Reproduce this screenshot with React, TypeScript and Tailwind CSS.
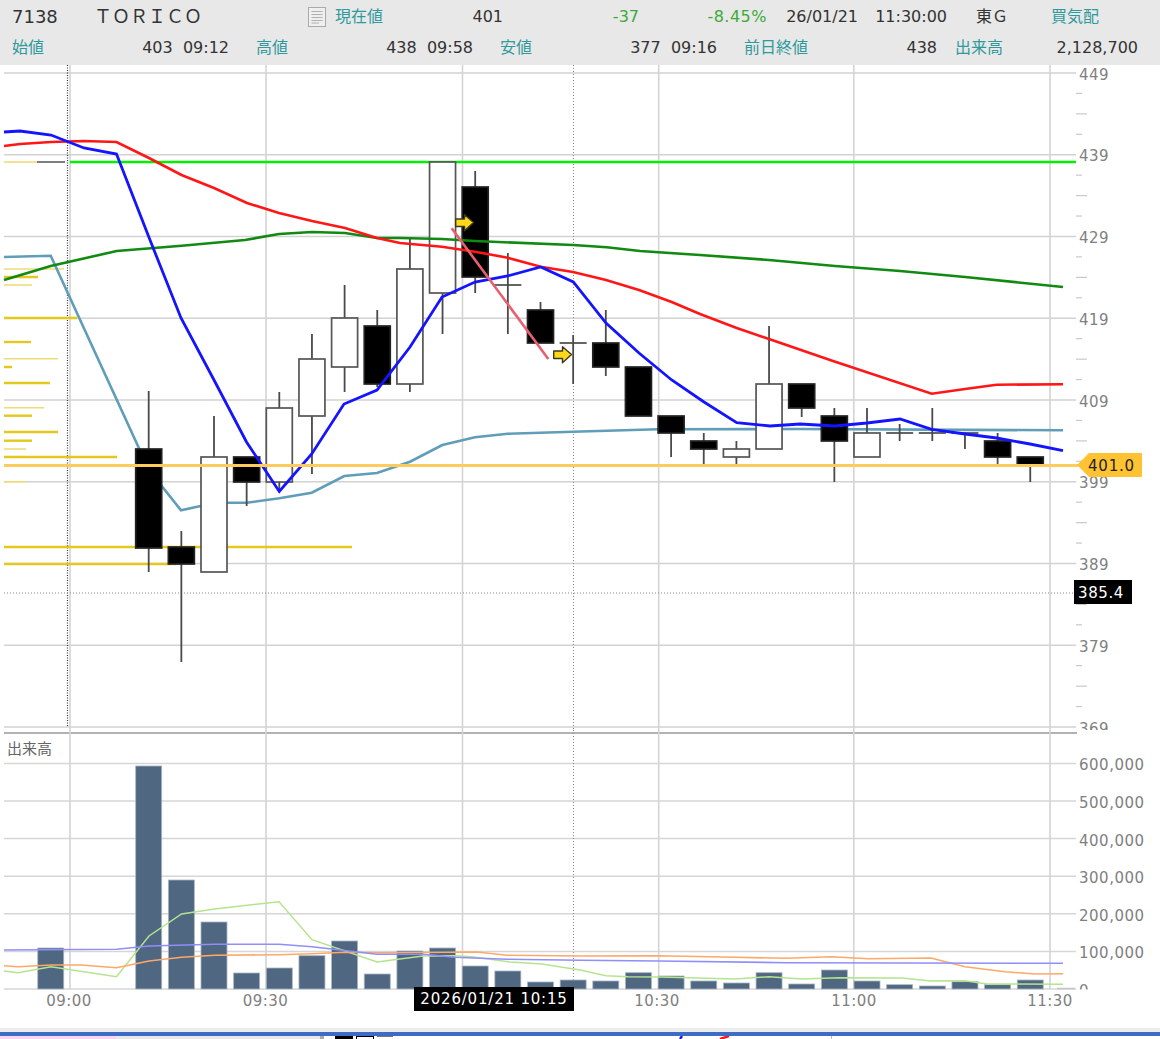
import React from "react"

type Candle = { body: [number, number]; wick: [number, number]; kind: "up" | "down" | "doji" }

const barX = (i: number) => 148.7 + 32.65 * i

const candles: Candle[] = [
  { kind: "down", body: [449, 548], wick: [391, 572] },
  { kind: "down", body: [547, 564], wick: [531, 662] },
  { kind: "up", body: [457, 572], wick: [416, 572] },
  { kind: "down", body: [457, 482], wick: [457, 506] },
  { kind: "up", body: [408, 482], wick: [392, 491] },
  { kind: "up", body: [359, 416], wick: [334, 474] },
  { kind: "up", body: [318, 367], wick: [285, 392] },
  { kind: "down", body: [326, 384], wick: [310, 387] },
  { kind: "up", body: [269, 384], wick: [237, 392] },
  { kind: "up", body: [162, 293], wick: [162, 334] },
  { kind: "down", body: [187, 277], wick: [171, 293] },
  { kind: "doji", body: [285, 285], wick: [253, 334] },
  { kind: "down", body: [310, 343], wick: [302, 343] },
  { kind: "doji", body: [343, 343], wick: [335, 384] },
  { kind: "down", body: [343, 367], wick: [310, 376] },
  { kind: "down", body: [367, 416], wick: [367, 416] },
  { kind: "down", body: [416, 433], wick: [416, 457] },
  { kind: "down", body: [441, 449], wick: [433, 465] },
  { kind: "up", body: [449, 457], wick: [441, 465] },
  { kind: "up", body: [384, 449], wick: [326, 449] },
  { kind: "down", body: [384, 408], wick: [384, 417] },
  { kind: "down", body: [416, 441], wick: [408, 482] },
  { kind: "up", body: [433, 457], wick: [408, 457] },
  { kind: "doji", body: [433, 433], wick: [424, 441] },
  { kind: "doji", body: [433, 433], wick: [408, 441] },
  { kind: "doji", body: [433, 433], wick: [433, 449] },
  { kind: "down", body: [441, 457], wick: [433, 465] },
  { kind: "down", body: [457, 465], wick: [457, 482] },
]

// moving averages, in picture coordinates
const blueLine = "4,132 20,131 51,135 84,148 116.5,154 150,240 181,318 214,380 246.5,442 279.3,491.5 311.7,454 344,404 377,390 410,347 442,297 475,282 507.7,276 540.7,267 573.3,282 606,323 639,353 671.7,380 704,402 736.7,422.7 770,426 800,424 835,426 867,423 900,419 931.7,429.3 965,434 996.7,438 1030,444 1063,450.7"
const redLine = "4,146 20,144 51,142 84,141 116.5,142 149,158 181.5,175 214,188 247,203 279,213 312,221 345,228 377,238 400,243 442,246.7 475,251.7 507.7,257.7 540.7,266.7 573,272 606,280 639,290 671.7,302 700,314 736.7,328 769,339 833,361 931.7,393.7 965,389 996.7,384.7 1063,384.3"
const greenLine = "4,280 50.7,266 116.7,251 181.7,245.7 245,240 279,234 312,232 345,233 377,238 400,238 442,239 475,241 573,245 606.7,247.3 640,251 700,255 769,260 835,266 900,271 965,277 1063,287"
const tealLine = "4,257 50.7,255.7 149,470 181,510.3 200.7,506 228,502.7 246.7,502.7 279.3,498.3 311.7,492.7 344.3,476 377,473 410,461.7 442.3,445 475,437.3 507.7,433.7 573,431.7 658,429.3 800,429 1063,430.3"

// volume profile along the left edge: y, right end, weight
const profile: [number, number, "thick" | "thin"][] = [
  [269, 64, "thin"], [277, 38, "thick"], [285, 32, "thin"], [318, 77, "thick"], [342, 31, "thick"],
  [358.7, 58, "thin"], [367, 12, "thick"], [383, 50, "thick"], [407.7, 44, "thin"], [415.7, 32, "thick"],
  [432, 58, "thick"], [440.7, 32, "thick"], [449, 26, "thin"], [457, 117, "thick"], [481.7, 26, "thin"],
  [547, 352, "thick"], [564, 176, "thick"],
]

// tops of the volume bars; the first one stands three slots before the first candle
const volumeTops = [948, 766, 880, 922, 973, 968, 955.7, 941, 974, 951, 948, 966, 971, 982, 980, 981, 972.7, 976, 981, 983, 972.7, 984, 970, 981, 984.7, 986, 981.7, 984.7, 980]

const volGreen = "4,971 18,972.7 51,966.7 116.5,976.7 149,936 181.6,914 214.6,909 279,901.7 312,939.7 377,962 423,956 455,955.7 472,956.7 510,962 542,964 580,970 606,975.7 628,976.7 659,977 735,979 769,976.7 802,979 839,977.7 902,978 931,981 965,980.7 987,984 1063,984.3"
const volBlue = "4,950 116.5,949.3 149,946 214.6,944.3 279,944.3 312,946.7 377,954.3 423,954.3 455,957.3 507,959.3 580,960.3 658,961 787,962.7 1063,963.3"
const volOrange = "4,965.7 18,966.7 51,965 81,965 116.5,967.7 149,961 181.6,957.3 214.6,955.3 279,954.7 312,953.7 344.5,952.3 377,952.7 477,952 507,955.3 580,956 658,955.7 735,957.3 787,958.3 831.6,956.7 868.6,958.7 931,958 965,966.7 1005,971.7 1035,974 1063,973.7"

const priceTicks = [449, 439, 429, 419, 409, 399, 389, 379, 369]
const volumeTicks = ["600,000", "500,000", "400,000", "300,000", "200,000", "100,000", "0"]
const gridX = [70, 266, 462.5, 658.7, 853.8, 1050]
const times: [string, number][] = [["09:00", 69], ["09:30", 265.5], ["10:30", 657], ["11:00", 854], ["11:30", 1050]]

const priceY = (i: number) => 73 + 81.75 * i
const volumeY = (i: number) => 763.4 + 37.6 * i

function Arrow({ x, y }: { x: number; y: number }) {
  return (
    <path
      transform={`translate(${x} ${y})`}
      d="M0.7 5H9.5V0.8L18.5 8.5L9.5 16.7V12.5H0.7Z"
      fill="#ffd81a"
      stroke="#3a3a20"
      strokeWidth="1.4"
      strokeLinejoin="round"
    />
  )
}

function CandleMark({ c, i }: { c: Candle; i: number }) {
  const x = barX(i)
  return (
    <g>
      <line x1={x} x2={x} y1={c.wick[0]} y2={c.wick[1]} stroke="#4a4a4a" strokeWidth="1.8" />
      {c.kind === "doji" ? (
        <line x1={x - 13.5} x2={x + 13.5} y1={c.body[0]} y2={c.body[0]} stroke="#4a4a4a" strokeWidth="1.7" />
      ) : (
        <rect
          x={x - 13}
          y={c.body[0]}
          width="26"
          height={c.body[1] - c.body[0]}
          fill={c.kind === "down" ? "#000" : "#fff"}
          stroke={c.kind === "down" ? "#222" : "#555"}
          strokeWidth="1.7"
        />
      )}
    </g>
  )
}

function PricePane() {
  return (
    <svg viewBox="0 65 1160 665" className="block w-[1160px] h-[665px] text-[15px] tracking-[0.5px]">
      {/* grid */}
      {priceTicks.map((_, i) => (
        <line key={i} x1="4" x2="1076" y1={priceY(i)} y2={priceY(i)} stroke="#d2d2d2" strokeWidth="1.5" />
      ))}
      {gridX.map((x) => (
        <line key={x} x1={x} x2={x} y1="65" y2="730" stroke="#d4d4d4" strokeWidth="1.6" />
      ))}
      <line x1="67.5" x2="67.5" y1="65" y2="727" stroke="#333" strokeWidth="1.2" strokeDasharray="1 1.5" />
      <line x1="573.5" x2="573.5" y1="65" y2="730" stroke="#888" strokeWidth="1" strokeDasharray="1 2" />
      <line x1="4" x2="1075" y1="593" y2="593" stroke="#888" strokeWidth="1" strokeDasharray="1 2" />

      {/* axis */}
      {priceTicks.map((p, i) => (
        <g key={p}>
          <text x="1079" y={priceY(i) + 6.5} fill="#808080">{p}</text>
          {i < 8 &&
            [20.4, 40.9, 61.3].map((d, k) => (
              <line
                key={d}
                x1="1076"
                x2={k === 1 ? 1087 : 1082}
                y1={priceY(i) + d}
                y2={priceY(i) + d}
                stroke="#c8c8c8"
                strokeWidth="1.2"
              />
            ))}
        </g>
      ))}

      {/* volume profile */}
      <line x1="4" x2="37" y1="162" y2="162" stroke="#eed873" strokeWidth="1.5" />
      <line x1="37" x2="65" y1="162" y2="162" stroke="#555" strokeWidth="1.5" />
      {profile.map(([y, end, w]) => (
        <line
          key={y}
          x1="4"
          x2={end}
          y1={y}
          y2={y}
          stroke={w === "thick" ? "#e3c81e" : "#eedc78"}
          strokeWidth={w === "thick" ? 2.4 : 1.6}
        />
      ))}

      <polyline points={tealLine} fill="none" stroke="#5f9db8" strokeWidth="2.6" />
      <line x1="70" x2="1076" y1="162" y2="162" stroke="#00f000" strokeWidth="2.6" />

      {candles.map((c, i) => (
        <CandleMark key={i} c={c} i={i} />
      ))}

      <polyline points={greenLine} fill="none" stroke="#118a11" strokeWidth="2.6" />
      <polyline points={redLine} fill="none" stroke="#ff1616" strokeWidth="2.6" />
      <polyline points={blueLine} fill="none" stroke="#1414ff" strokeWidth="2.8" />
      <line x1="451.7" y1="228.3" x2="548.3" y2="359" stroke="#e8606f" strokeWidth="2.6" />
      <line x1="4" x2="1078" y1="465.5" y2="465.5" stroke="#ffcb5c" strokeWidth="3" />
      <Arrow x={455} y={214} />
      <Arrow x={553} y={346} />
    </svg>
  )
}

function VolumePane() {
  return (
    <svg viewBox="0 730 1160 298" className="block w-[1160px] h-[298px] text-[15px] tracking-[0.5px]">
      <defs>
        <clipPath id="axis-clip">
          <rect x="1076" y="730" width="84" height="259.5" />
        </clipPath>
      </defs>
      <line x1="4" x2="1077" y1="733" y2="733" stroke="#999" strokeWidth="1.6" />
      {volumeTicks.map((_, i) => (
        <line key={i} x1="4" x2="1076" y1={volumeY(i)} y2={volumeY(i)} stroke="#d6d6d6" strokeWidth="1.5" />
      ))}
      {gridX.map((x) => (
        <line key={x} x1={x} x2={x} y1="730" y2="989" stroke="#d4d4d4" strokeWidth="1.6" />
      ))}
      <line x1="573.5" x2="573.5" y1="730" y2="989" stroke="#888" strokeWidth="1" strokeDasharray="1 2" />
      <text x="7" y="754" fill="#666" className="text-[15px] tracking-normal">出来高</text>

      {volumeTops.map((top, i) => {
        const x = barX(i === 0 ? -3 : i - 1)
        return (
          <rect key={i} x={x - 13} y={top} width="26" height={989 - top} fill="#4f6780" stroke="#a8b6c4" strokeWidth="0.8" />
        )
      })}

      <polyline points={volGreen} fill="none" stroke="#b4e58e" strokeWidth="1.5" />
      <polyline points={volOrange} fill="none" stroke="#ffa868" strokeWidth="1.6" />
      <polyline points={volBlue} fill="none" stroke="#8f8ffa" strokeWidth="1.6" />

      <g clipPath="url(#axis-clip)">
        {volumeTicks.map((t, i) => (
          <text key={t} x="1079" y={volumeY(i) + 7} fill="#808080">{t}</text>
        ))}
      </g>
      <line x1="1057" x2="1075" y1="988.5" y2="988.5" stroke="#c0c6cc" strokeWidth="1.5" />
      {times.map(([t, x]) => (
        <text key={t} x={x} y="1006" textAnchor="middle" fill="#808080">{t}</text>
      ))}
    </svg>
  )
}

function Label({ w, children }: { w: string; children: React.ReactNode }) {
  return <span className={`${w} text-right text-[#2f9a9c]`}>{children}</span>
}

function Value({ w, children }: { w: string; children: React.ReactNode }) {
  return <span className={`${w} text-right whitespace-pre text-[#333]`}>{children}</span>
}

function Header() {
  return (
    <div className="h-[65px] shrink-0 bg-[#e8e8e8] pl-3 text-[16px] leading-6 pt-[5px] flex flex-col gap-[7px]">
      <div className="flex items-center h-6">
        <span className="w-[82px] text-[18px] text-[#333]">7138</span>
        <span className="w-[214px] text-[18px] text-[#333]">ＴＯＲＩＣＯ</span>
        <span className="w-[27px] flex">
          <svg width="19" height="20" viewBox="0 0 19 20">
            <rect x="0.5" y="0.5" width="17" height="19" fill="#efefef" stroke="#aaa" />
            <path d="M3.5 4.5H14.5M3.5 7.5H14.5M3.5 10.5H14.5M3.5 13.5H14.5M3.5 16H11" stroke="#b0b0b0" fill="none" />
          </svg>
        </span>
        <span className="w-[48px] text-[#2f9a9c]">現在値</span>
        <Value w="w-[120px]">401</Value>
        <span className="w-[136px] text-right text-[#3cab38]">-37</span>
        <span className="w-[128px] text-right text-[#3cab38] tracking-[0.5px]">-8.45%</span>
        <Value w="w-[91px]">26/01/21</Value>
        <Value w="w-[89px]">11:30:00</Value>
        <Value w="w-[61px]">東Ｇ</Value>
        <Label w="w-[91px]">買気配</Label>
      </div>
      <div className="flex items-center h-6">
        <span className="w-[32px] text-[#2f9a9c]">始値</span>
        <Value w="w-[185px]">403  09:12</Value>
        <Label w="w-[59px]">高値</Label>
        <Value w="w-[185px]">438  09:58</Value>
        <Label w="w-[59px]">安値</Label>
        <Value w="w-[185px]">377  09:16</Value>
        <Label w="w-[91px]">前日終値</Label>
        <Value w="w-[129px]">438</Value>
        <Label w="w-[66px]">出来高</Label>
        <Value w="w-[135px]">2,128,700</Value>
      </div>
    </div>
  )
}

function Footer() {
  return (
    <div className="h-[11px] shrink-0 flex flex-col">
      <div className="h-1 bg-[#ececec]" />
      <div className="h-1 bg-[#3c6cc4]" />
      <div className="h-[3px] flex">
        <div className="w-[116px] bg-[#fbd5ef]" />
        <div className="w-[204px] bg-[#e8e8e8]" />
        <div className="w-1 bg-[#aaa]" />
        <div className="w-[11px]" />
        <div className="w-[18px] bg-black" />
        <div className="w-[3px]" />
        <div className="w-[18px] border-x border-t border-black" />
        <div className="w-[3px]" />
        <div className="w-4 border-t border-[#777]" />
        <div className="w-[282px]" />
        <svg width="60" height="3" viewBox="0 0 60 3" className="shrink-0">
          <path d="M5 3L7 0" stroke="#1414ff" strokeWidth="2.4" />
          <path d="M45 3L54 0" stroke="#ff1616" strokeWidth="2.4" />
        </svg>
        <div className="w-[96px]" />
        <div className="w-px bg-[#bbb]" />
      </div>
    </div>
  )
}

export default function App() {
  return (
    <div className="relative w-[1160px] h-[1039px] overflow-hidden flex flex-col bg-white [font-family:'DejaVu_Sans','Noto_Sans_CJK_JP',sans-serif]">
      <Header />
      <PricePane />
      <VolumePane />
      <Footer />

      {/* price tags over the axis */}
      <div className="absolute left-[1077px] top-[453px] w-[65px] h-6 bg-[#ffc233] [clip-path:polygon(0_50%,12px_0,100%_0,100%_100%,12px_100%)] pl-[11px] text-[15px] leading-[27px] tracking-[0.8px] text-[#222]">
        401.0
      </div>
      <div className="absolute left-[1074px] top-[580px] w-[58px] h-6 bg-black pl-1 text-[15px] leading-[27px] tracking-[0.6px] text-white">
        385.4
      </div>
      <div className="absolute left-[414px] top-[987px] w-[160px] h-6 bg-black text-center text-[15px] leading-6 tracking-[0.8px] text-white">
        2026/01/21 10:15
      </div>
    </div>
  )
}
